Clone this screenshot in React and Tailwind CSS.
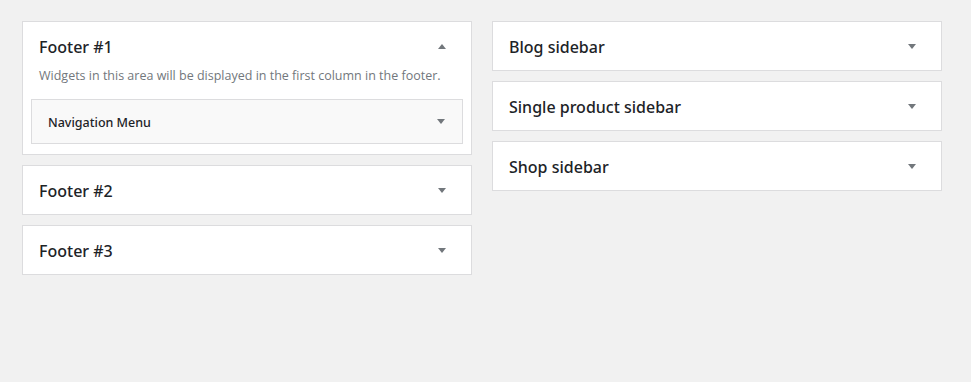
import { useState } from "react";

function Caret({ up }) {
  return (
    <svg width="8" height="5" viewBox="0 0 8 5" className="shrink-0">
      {up ? (
        <path d="M0 5 L4 0 L8 5 Z" fill="#72777c" />
      ) : (
        <path d="M0 0 L8 0 L4 5 Z" fill="#72777c" />
      )}
    </svg>
  );
}

const headFont = { fontFamily: '"Noto Sans", "Open Sans", sans-serif' };

function Sidebar({ title, open, description, widgets = [] }) {
  return (
    <div className="bg-white border border-[#dcdcde]">
      <div className="h-[48px] flex items-center justify-between pl-4 pr-[25px] pt-[1px]">
        <h2 className="text-[16px] font-medium text-[#1d2327]" style={headFont}>
          {title}
        </h2>
        <Caret up={open} />
      </div>
      {open && (
        <div className="px-2 pb-[10px]">
          <p className="px-2 text-[12.5px] text-[#72777c] -mt-[3px] mb-[14px] leading-[18px]">
            {description}
          </p>
          {widgets.map((w) => (
            <div
              key={w}
              className="h-[45px] bg-[#f9f9f9] border border-[#dcdcde] flex items-center justify-between pl-4 pr-[17px]"
            >
              <h3 className="text-[12.5px] font-medium text-[#1d2327] pt-[3px]" style={headFont}>
                {w}
              </h3>
              <Caret />
            </div>
          ))}
        </div>
      )}
    </div>
  );
}

export default function App() {
  const [left] = useState([
    {
      title: "Footer #1",
      open: true,
      description:
        "Widgets in this area will be displayed in the first column in the footer.",
      widgets: ["Navigation Menu"],
    },
    { title: "Footer #2" },
    { title: "Footer #3" },
  ]);
  const right = [
    { title: "Blog sidebar" },
    { title: "Single product sidebar" },
    { title: "Shop sidebar" },
  ];

  return (
    <div
      className="w-[971px] h-[382px] bg-[#f1f1f1] pt-[21px] pl-[22px]"
      style={{ fontFamily: '"Open Sans", "Noto Sans", sans-serif' }}
    >
      <div className="flex gap-[20px] items-start">
        <div className="w-[450px] flex flex-col gap-[10px]">
          {left.map((s) => (
            <Sidebar key={s.title} {...s} />
          ))}
        </div>
        <div className="w-[450px] flex flex-col gap-[10px]">
          {right.map((s) => (
            <Sidebar key={s.title} {...s} />
          ))}
        </div>
      </div>
    </div>
  );
}
